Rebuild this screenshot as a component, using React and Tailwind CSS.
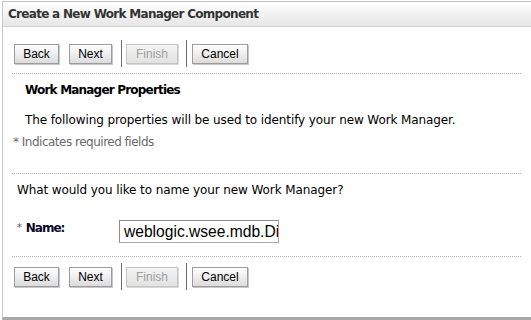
function WizardButton({ label, width, disabled }) {
  return (
    <button
      type="button"
      disabled={disabled}
      className={
        disabled
          ? "h-[20px] border border-[#c4c4c4] bg-gradient-to-b from-[#f4f4f4] to-[#e2e2e2] text-[12px] text-[#a0a0a0] shadow-[1px_1px_0_#d8d8d8]"
          : "h-[20px] border border-[#9c9c9c] bg-gradient-to-b from-white to-[#dcdcdc] text-[12px] text-black shadow-[1px_1px_0_#c8c8c8]"
      }
      style={{ width, fontFamily: '"Liberation Sans", Arial, sans-serif' }}
    >
      {label}
    </button>
  );
}

function ButtonBar() {
  return (
    <div className="flex items-center">
      <WizardButton label="Back" width={45} />
      <div className="w-[10px]" />
      <WizardButton label="Next" width={43} />
      <div className="ml-[9px] h-[27px] w-px bg-[#6e6e6e]" />
      <div className="ml-[4px]">
        <WizardButton label="Finish" width={52} disabled />
      </div>
      <div className="ml-[8px] h-[27px] w-px bg-[#6e6e6e]" />
      <div className="ml-[5px]">
        <WizardButton label="Cancel" width={56} />
      </div>
    </div>
  );
}

export default function App() {
  return (
    <div
      className="h-[320px] w-[531px] overflow-hidden bg-white pl-[2px] pt-px text-[12px] text-[#222]"
      style={{ fontFamily: '"DejaVu Sans", Verdana, sans-serif' }}
    >
      <div className="flex h-[319px] flex-col border-b-[3px] border-l border-t border-b-[#a8a8a8] border-l-[#c8c8c8] border-t-[#c4c4c4]">
        <div className="flex h-[25px] items-center border-b border-[#d2d2d2] bg-gradient-to-b from-white to-[#e6e6e6] pl-[5px] text-[12px] font-bold tracking-[-0.7px] text-[#333]">
          Create a New Work Manager Component
        </div>

        <div className="flex flex-col pl-[11px] pr-[10px]">
          <div className="mt-[13px]">
            <ButtonBar />
          </div>
          <div className="-ml-[2px] mt-[6px] border-t border-dotted border-[#b4b4b4]" />

          <div className="ml-[11px] mt-[9px] font-bold leading-[14px] tracking-[-0.8px] text-black">
            Work Manager Properties
          </div>
          <div className="ml-[11px] mt-[16px] leading-[14px] tracking-[-0.1px] text-black">
            The following properties will be used to identify your new Work Manager.
          </div>
          <div className="-ml-[1px] mt-[8px] leading-[14px] tracking-[-0.5px] text-[#6a6a6a]">
            * Indicates required fields
          </div>
          <div className="-ml-[2px] mt-[24px] border-t border-dotted border-[#b4b4b4]" />

          <div className="ml-[3px] mt-[9px] leading-[14px] tracking-[-0.1px] text-black">
            What would you like to name your new Work Manager?
          </div>

          <div className="mt-[23px] flex items-start">
            <div className="ml-[3px] mt-[1px] w-[102px] leading-[14px]">
              <span className="align-top text-[10px] text-[#555]">*</span>{" "}
              <span className="font-bold tracking-[-1px] text-[#0a0a2a]">Name:</span>
            </div>
            <div
              className="flex h-[23px] w-[160px] items-center overflow-hidden whitespace-nowrap border border-[#a8a8a8] border-l-[#8c8c8c] border-t-[#8c8c8c] pl-[4px] text-[15.6px] text-black"
              style={{ fontFamily: '"Liberation Sans", Arial, sans-serif' }}
            >
              weblogic.wsee.mdb.DispatchPolicy
            </div>
          </div>
          <div className="-ml-[2px] mt-[13px] border-t border-dotted border-[#b4b4b4]" />

          <div className="mt-[6px]">
            <ButtonBar />
          </div>
        </div>
      </div>
    </div>
  );
}
